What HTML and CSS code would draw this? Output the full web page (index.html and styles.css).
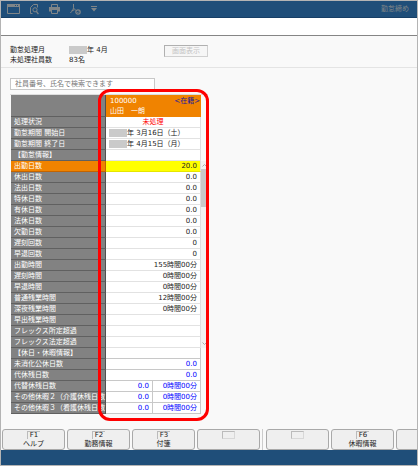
FILE: index.html
```
<!DOCTYPE html>
<html lang="ja">

<head>
  <meta charset="UTF-8">
  <meta name="viewport" content="width=device-width, initial-scale=1.0">
  <title>勤怠締め</title>
  <link rel="stylesheet" href="styles.css">
</head>

<body>
  <!-- Title bar -->
  <header class="topbar">
    <div class="tools">
      <button type="button" class="tool" aria-label="ウィンドウ">
        <svg width="13" height="10" viewBox="0 0 13 10"><path d="M.5 1h12v8.5H.5z" fill="none" stroke="currentColor"/><path d="M0 0h13v3H0z" fill="currentColor"/><path d="M8 1h1v1H8zM10 1h1v1h-1z" fill="#1f4e79"/></svg>
      </button>
      <button type="button" class="tool" aria-label="プレビュー">
        <svg width="9" height="11" viewBox="0 0 9 11"><path d="M2.5 9.5h-2v-6l3-3h4v3" fill="none" stroke="currentColor"/><circle cx="5" cy="5.8" r="2.1" fill="none" stroke="currentColor"/><path d="M6.4 7.4l2 2.8" stroke="currentColor" stroke-width="1.3"/></svg>
      </button>
      <button type="button" class="tool" aria-label="印刷">
        <svg width="11" height="10" viewBox="0 0 11 10"><path d="M2.5 3V.5h6V3" fill="none" stroke="currentColor"/><path d="M0 3h11v4.5H9V6H2v1.5H0z" fill="currentColor"/><path d="M2.5 6v3.5h6V6" fill="none" stroke="currentColor"/></svg>
      </button>
      <button type="button" class="tool" aria-label="PDF設定">
        <svg width="11" height="11" viewBox="0 0 11 11"><path d="M3.5 0v3.5c0 2-1.5 4-3.2 5.5M3.5 3.5c.5 1.5 1.500 2.300 2.700 2.800M1.500 6.800l3-1" fill="none" stroke="currentColor"/><circle cx="8" cy="8" r="2.2" fill="none" stroke="currentColor" stroke-width="1.2"/><path d="M7 8l.8.8L9.2 7.3" fill="none" stroke="currentColor" stroke-width=".7"/></svg>
      </button>
      <button type="button" class="tool" aria-label="その他">
        <svg width="6" height="6" viewBox="0 0 6 6"><path d="M0 0h6v1H0zM0 2h6L3 5.5z" fill="currentColor"/></svg>
      </button>
    </div>
    <h1>勤怠締め</h1>
  </header>
  <div class="menu-space"></div>

  <main>
    <section class="summary">
      <dl>
        <dt>勤怠処理月</dt>
        <dd><span class="mask"></span>年 4月</dd>
        <dt>未処理社員数</dt>
        <dd>83名</dd>
      </dl>
      <button type="button" class="show-btn" disabled>画面表示</button>
    </section>

    <section class="content">
      <input type="text" class="search" aria-label="社員検索" placeholder="社員番号、氏名で検索できます">

      <div class="grid">
        <table>
          <colgroup>
            <col class="col-label">
            <col class="col-days">
            <col class="col-time">
          </colgroup>
          <thead>
            <tr>
              <td class="corner"></td>
              <th class="employee" colspan="2" scope="col">
                <div class="employee-id"><span>100000</span><span class="status">&lt;在籍&gt;</span></div>
                <div>山田　一朗</div>
              </th>
            </tr>
          </thead>
          <tbody>
            <tr><th scope="row">処理状況</th><td colspan="2" class="pending">未処理</td></tr>
            <tr><th scope="row">勤怠期間 開始日</th><td colspan="2" class="date"><span class="mask"></span>年 3月16日（土）</td></tr>
            <tr><th scope="row">勤怠期間 終了日</th><td colspan="2" class="date"><span class="mask"></span>年 4月15日（月）</td></tr>
            <tr><th scope="row">【勤怠情報】</th><td colspan="2"></td></tr>
            <tr class="selected"><th scope="row">出勤日数</th><td colspan="2">20.0</td></tr>
            <tr><th scope="row">休出日数</th><td colspan="2">0.0</td></tr>
            <tr><th scope="row">法出日数</th><td colspan="2">0.0</td></tr>
            <tr><th scope="row">特休日数</th><td colspan="2">0.0</td></tr>
            <tr><th scope="row">有休日数</th><td colspan="2">0.0</td></tr>
            <tr><th scope="row">法休日数</th><td colspan="2">0.0</td></tr>
            <tr><th scope="row">欠勤日数</th><td colspan="2">0.0</td></tr>
            <tr><th scope="row">遅刻回数</th><td colspan="2">0</td></tr>
            <tr><th scope="row">早退回数</th><td colspan="2">0</td></tr>
            <tr><th scope="row">出勤時間</th><td colspan="2">155時間00分</td></tr>
            <tr><th scope="row">遅刻時間</th><td colspan="2">0時間00分</td></tr>
            <tr><th scope="row">早退時間</th><td colspan="2">0時間00分</td></tr>
            <tr><th scope="row">普通残業時間</th><td colspan="2">12時間00分</td></tr>
            <tr><th scope="row">深夜残業時間</th><td colspan="2">0時間00分</td></tr>
            <tr><th scope="row">早出残業時間</th><td colspan="2"></td></tr>
            <tr><th scope="row">フレックス所定超過</th><td colspan="2"></td></tr>
            <tr><th scope="row">フレックス法定超過</th><td colspan="2"></td></tr>
          </tbody>
          <tbody class="leave">
            <tr><th scope="row">【休日・休暇情報】</th><td colspan="2"></td></tr>
            <tr><th scope="row">未消化公休日数</th><td colspan="2">0.0</td></tr>
            <tr><th scope="row">代休残日数</th><td colspan="2">0.0</td></tr>
            <tr><th scope="row">代替休残日数</th><td>0.0</td><td>0時間00分</td></tr>
            <tr><th scope="row">その他休暇２（介護休残日数</th><td>0.0</td><td>0時間00分</td></tr>
            <tr><th scope="row">その他休暇３（看護休残日数</th><td>0.0</td><td>0時間00分</td></tr>
          </tbody>
        </table>
        <div class="scrollbar">
          <svg width="5" height="3" viewBox="0 0 5 3"><path d="M.5 2.5l2-2 2 2" fill="none" stroke="#aaa"/></svg>
          <div class="thumb"></div>
          <svg class="down" width="5" height="3" viewBox="0 0 5 3"><path d="M.5.5l2 2 2-2" fill="none" stroke="#aaa"/></svg>
        </div>
        <div class="highlight"></div>
      </div>
    </section>
  </main>

  <!-- Function keys -->
  <nav class="keys">
    <button type="button"><kbd>F1</kbd>ヘルプ</button>
    <button type="button"><kbd>F2</kbd>勤務情報</button>
    <button type="button"><kbd>F3</kbd>付箋</button>
    <button type="button" class="empty" aria-label="F4"><kbd></kbd></button>
    <span class="divider"></span>
    <button type="button" class="empty" aria-label="F5"><kbd></kbd></button>
    <button type="button"><kbd>F6</kbd>休暇情報</button>
    <button type="button" class="empty" aria-label="F7"><kbd></kbd></button>
  </nav>
  <footer class="statusbar"></footer>
</body>

</html>
```

FILE: styles.css
```
* {
  margin: 0;
  padding: 0;
  box-sizing: border-box;
}

body {
  display: flex;
  flex-direction: column;
  min-height: 100vh;
  border: 1px solid #b4b4b4;
  background-color: #f9f9f9;
  color: #222;
  font-family: "DejaVu Sans", "Noto Sans CJK JP", sans-serif;
  font-size: 7px;
  line-height: 10px;
  overflow-x: hidden;
}

button,
input {
  font: inherit;
  color: inherit;
}

.topbar {
  display: flex;
  justify-content: space-between;
  align-items: center;
  height: 17px;
  padding: 0 8px 0 6px;
  background-color: #1f4e79;
  border-bottom: 1px solid #173f66;
  color: #7f8588;
}

.topbar h1 {
  font-size: 7px;
  font-weight: normal;
}

.tools {
  display: flex;
  align-items: center;
  gap: 10px;
}

.tool {
  display: flex;
  background: none;
  border: none;
}

.menu-space {
  height: 18px;
  background-color: #fff;
  border-bottom: 1px solid #858585;
}

main {
  flex: 1;
}

.summary {
  display: flex;
  align-items: flex-start;
  padding: 9px 9px 2px;
  border-bottom: 1px solid #e4e4e4;
}

.summary dl {
  display: grid;
  grid-template-columns: 59px 95px;
}

.mask {
  display: inline-block;
  width: 18px;
  height: 8px;
  background-color: #cacaca;
  vertical-align: middle;
}

.show-btn {
  width: 44px;
  height: 12px;
  border: 1px solid #b0b0b0;
  border-right-color: #d0d0d0;
  border-bottom-color: #d0d0d0;
  background-color: #f6f6f6;
  color: #c4c4c4;
}

.content {
  padding: 10px 9px;
}

.search {
  display: block;
  width: 145px;
  height: 12px;
  padding: 0 4px;
  border: 1px solid #c8c8c8;
  background-color: #fff;
}

.search::placeholder {
  color: #777;
  opacity: 1;
}

.grid {
  display: flex;
  position: relative;
  width: 198px;
  margin-top: 4px;
  padding-left: 1px;
  border-top: 1px solid #ddd;
}

table {
  width: 190px;
  table-layout: fixed;
  border-collapse: separate;
  border-spacing: 0;
}

.col-label {
  width: 95px;
}

.col-days {
  width: 47px;
}

.col-time {
  width: 48px;
}

th {
  font-weight: normal;
  text-align: left;
}

tbody th,
.corner {
  height: 11px;
  padding: 0 0 0 3px;
  background-color: #828282;
  border-bottom: 1px solid #606060;
  border-right: 1px solid #505050;
  color: #fff;
  white-space: nowrap;
}

tbody td {
  height: 11px;
  padding: 0 3px;
  background-color: #fff;
  border-bottom: 1px solid #e2e2e2;
  border-right: 1px solid #ddd;
  text-align: right;
  white-space: nowrap;
}

.employee {
  padding: 1px 1px 1px 4px;
  background-color: #f08300;
  color: #fff;
}

.employee-id {
  display: flex;
  justify-content: space-between;
}

.employee .status {
  color: #1a1a99;
}

tbody .pending {
  color: #f00;
  text-align: center;
}

tbody .date {
  text-align: left;
}

.selected th {
  background-color: #f08300;
  border-bottom-color: #c46400;
  border-right-color: #c46400;
}

.selected td {
  background-color: #ff0;
  border-bottom-color: #e6e600;
}

.leave td {
  border-color: #c8c8c8;
  color: #00f;
}

.scrollbar {
  display: flex;
  flex-direction: column;
  align-items: center;
  width: 7px;
  height: 187px;
  margin-top: 66px;
  padding: 3px 0;
  background-color: #f1f1f1;
}

.thumb {
  width: 7px;
  height: 38px;
  margin-top: 2px;
  background-color: #c9c9c9;
}

.scrollbar .down {
  margin-top: auto;
}

/* Red frame drawn over the employee column */
.highlight {
  position: absolute;
  top: -6px;
  right: -1px;
  bottom: -7px;
  width: 111px;
  border: 3px solid #f00;
  border-radius: 12px;
  pointer-events: none;
}

.keys {
  display: flex;
  gap: 2px;
  padding: 0 1px;
  overflow: hidden;
}

.keys button {
  display: flex;
  flex: none;
  flex-direction: column;
  align-items: center;
  width: 63px;
  height: 21px;
  border: 1px solid #a9a9a9;
  border-radius: 3px;
  background-color: #efefef;
}

.keys kbd {
  width: 13px;
  height: 8px;
  margin-top: 1px;
  border-top: 1px solid #bbb;
  border-left: 1px solid #bbb;
  font: inherit;
  line-height: 7px;
  text-align: center;
}

.keys .empty kbd {
  border: 1px solid #d8d8d8;
  border-top-color: #bbb;
  border-left-color: #bbb;
}

.keys .divider {
  flex: none;
  width: 2px;
  border-left: 1px solid #ccc;
}

.statusbar {
  height: 15px;
  background-color: #1f4e79;
}
```
